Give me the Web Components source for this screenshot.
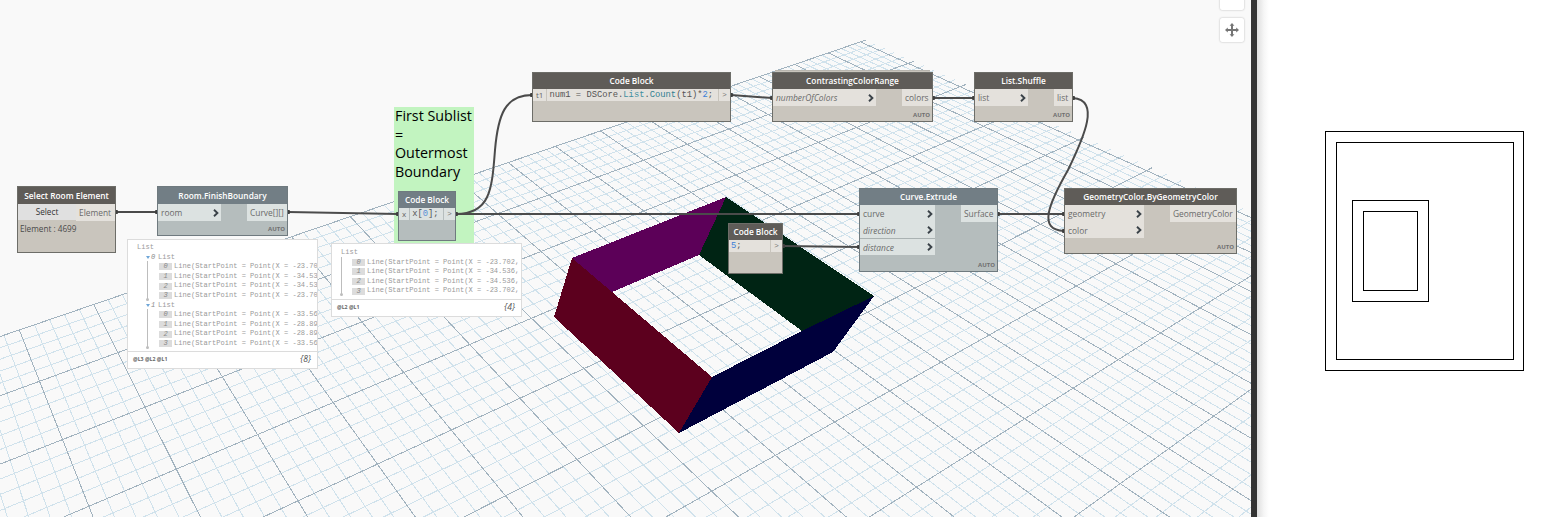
<!DOCTYPE html>
<html>
<head>
<meta charset="utf-8">
<title>Dynamo graph</title>
<style>
    html, body { margin: 0; padding: 0; background: #fff; overflow: hidden; }
</style>
</head>
<body>
<dyn-workspace>
    <dyn-grid></dyn-grid>
    <dyn-note x="394" y="107" w="80" h="136">First Sublist<br>=<br>Outermost<br>Boundary</dyn-note>
    <dyn-wires></dyn-wires>

    <dyn-node label="Select Room Element" x="17" y="186" w="99" h="67" style="--head-h:17px">
        <dyn-split>
            <dyn-button slot="in" style="width:58px">Select</dyn-button>
            <dyn-port slot="out" style="width:39px">Element</dyn-port>
        </dyn-split>
        <dyn-readout>Element : 4699</dyn-readout>
    </dyn-node>

    <dyn-node tone="blue" auto label="Room.FinishBoundary" x="157" y="186" w="131" h="50" style="--head-h:17px">
        <dyn-split>
            <dyn-port slot="in" chevron style="width:63px">room</dyn-port>
            <dyn-port slot="out" style="width:40px">Curve[][]</dyn-port>
        </dyn-split>
    </dyn-node>

    <dyn-node tone="blue" label="Code Block" x="398" y="191" w="58" h="50">
        <dyn-code port="x">x[<span style="color:#5b8fd6">0</span>];</dyn-code>
    </dyn-node>

    <dyn-node label="Code Block" x="532" y="72" w="199" h="50">
        <dyn-code port="t1">num1 = DSCore.<span style="color:#3f8f9f">List</span>.<span style="color:#2f7f90">Count</span>(t1)*<span style="color:#3c7fd8">2</span>;</dyn-code>
    </dyn-node>

    <dyn-node auto stacked label="ContrastingColorRange" x="772" y="72" w="161" h="50">
        <dyn-split>
            <dyn-port slot="in" chevron italic style="width:103px">numberOfColors</dyn-port>
            <dyn-port slot="out" style="width:30px">colors</dyn-port>
        </dyn-split>
    </dyn-node>

    <dyn-node auto label="List.Shuffle" x="974" y="72" w="99" h="50">
        <dyn-split>
            <dyn-port slot="in" chevron style="width:53px">list</dyn-port>
            <dyn-port slot="out" style="width:18px">list</dyn-port>
        </dyn-split>
    </dyn-node>

    <dyn-node tone="blue" auto label="Curve.Extrude" x="859" y="188" w="139" h="84">
        <dyn-split>
            <dyn-port slot="in" chevron style="width:75px">curve</dyn-port>
            <dyn-port slot="in" chevron italic style="width:75px">direction</dyn-port>
            <dyn-port slot="in" chevron italic divided style="width:75px">distance</dyn-port>
            <dyn-port slot="out" style="width:36px">Surface</dyn-port>
        </dyn-split>
    </dyn-node>

    <dyn-node auto label="GeometryColor.ByGeometryColor" x="1064" y="188" w="173" h="66">
        <dyn-split>
            <dyn-port slot="in" chevron style="width:79px">geometry</dyn-port>
            <dyn-port slot="in" chevron style="width:79px">color</dyn-port>
            <dyn-port slot="out" style="width:66px">GeometryColor</dyn-port>
        </dyn-split>
    </dyn-node>

    <dyn-node label="Code Block" x="728" y="223" w="55" h="51">
        <dyn-code><span style="color:#3c7fd8">5</span>;</dyn-code>
    </dyn-node>

    <dyn-watch x="127" y="239" w="191" h="130" pad="3" levels="@L3 @L2 @L1" count="{8}">
        <dyn-watch-head>List</dyn-watch-head>
        <dyn-watch-group index="0">
            <dyn-watch-row index="0">Line(StartPoint = Point(X = -23.70</dyn-watch-row>
            <dyn-watch-row index="1">Line(StartPoint = Point(X = -34.53</dyn-watch-row>
            <dyn-watch-row index="2">Line(StartPoint = Point(X = -34.53</dyn-watch-row>
            <dyn-watch-row index="3">Line(StartPoint = Point(X = -23.70</dyn-watch-row>
        </dyn-watch-group>
        <dyn-watch-group index="1">
            <dyn-watch-row index="0">Line(StartPoint = Point(X = -33.56</dyn-watch-row>
            <dyn-watch-row index="1">Line(StartPoint = Point(X = -28.89</dyn-watch-row>
            <dyn-watch-row index="2">Line(StartPoint = Point(X = -28.89</dyn-watch-row>
            <dyn-watch-row index="3">Line(StartPoint = Point(X = -33.56</dyn-watch-row>
        </dyn-watch-group>
    </dyn-watch>

    <dyn-watch x="331" y="243" w="191" h="74" pad="4" levels="@L2 @L1" count="{4}">
        <dyn-watch-head>List</dyn-watch-head>
        <dyn-watch-flat>
            <dyn-watch-row index="0">Line(StartPoint = Point(X = -23.702,</dyn-watch-row>
            <dyn-watch-row index="1">Line(StartPoint = Point(X = -34.536,</dyn-watch-row>
            <dyn-watch-row index="2">Line(StartPoint = Point(X = -34.536,</dyn-watch-row>
            <dyn-watch-row index="3">Line(StartPoint = Point(X = -23.702,</dyn-watch-row>
        </dyn-watch-flat>
    </dyn-watch>

    <dyn-nav></dyn-nav>
    <dyn-plan slot="side"></dyn-plan>
</dyn-workspace>

<script>
const SVG_NS = 'http://www.w3.org/2000/svg';

function shadowOf(el, html) {
    const root = el.attachShadow({ mode: 'open' });
    root.innerHTML = html;
    return root;
}

// free canvas items read their place from attributes
function place(el) {
    el.style.left = el.getAttribute('x') + 'px';
    el.style.top = el.getAttribute('y') + 'px';
    el.style.width = el.getAttribute('w') + 'px';
    el.style.height = el.getAttribute('h') + 'px';
}

class DynWorkspace extends HTMLElement {
    connectedCallback() {
        shadowOf(this, `
            <style>
                :host { display: flex; width: 1557px; height: 517px; overflow: hidden; font-family: "Open Sans", sans-serif; }
                .canvas { position: relative; width: 1251px; height: 517px; background: #f9f9f9; overflow: hidden; flex: none; }
                .divider { width: 6px; background: #333; flex: none; }
                .side { flex: 1; position: relative; background: linear-gradient(90deg, #dedede 0, #f6f6f6 7px, #fff 12px); }
            </style>
            <div class="canvas"><slot></slot></div>
            <div class="divider"></div>
            <div class="side"><slot name="side"></slot></div>
        `);
    }
}

class DynGrid extends HTMLElement {
    connectedCallback() {
        const root = shadowOf(this, `
            <style>
                :host { position: absolute; left: 0; top: 0; }
                svg { display: block; }
            </style>
            <svg width="1251" height="517" viewBox="0 0 1251 517"></svg>
        `);
        const svg = root.querySelector('svg');

        // two vanishing points and the far corner of the grid
        const C = [866, 40], VB = [3100, -725], VA = [-300, -480];
        const pt = (s, t) => {
            const w = 1 - s - t;
            return [(C[0] - s * VB[0] - t * VA[0]) / w, (C[1] - s * VB[1] - t * VA[1]) / w];
        };
        const S_MAX = 0.34, T_MAX = 0.5;
        // k counts major lines, fitted on the reference
        const sAt = k => 0.0754 + 0.0153 * k + 0.00024 * k * (k - 1) / 2;
        const tAt = k => 0.0433 * k;

        const minor = [], major = [];
        const add = (list, a, b) => list.push(`M${a[0].toFixed(1)} ${a[1].toFixed(1)}L${b[0].toFixed(1)} ${b[1].toFixed(1)}`);

        for (let i = -25; ; i++) {
            const s = sAt(i / 5);
            if (s > S_MAX) break;
            add(i % 5 === 0 ? major : minor, pt(s, 0), pt(s, T_MAX));
        }
        for (let i = 0; ; i++) {
            const t = tAt(i / 5);
            if (t > T_MAX) break;
            // these lines fan out a little from the far edge
            add(i % 5 === 0 ? major : minor, pt(0, t * 0.9104), pt(S_MAX, t * 1.019));
        }

        const path = (d, color) => {
            const p = document.createElementNS(SVG_NS, 'path');
            p.setAttribute('d', d);
            p.setAttribute('fill', 'none');
            p.setAttribute('stroke', color);
            p.setAttribute('stroke-width', '1');
            p.setAttribute('shape-rendering', 'crispEdges');
            svg.appendChild(p);
        };
        path(minor.join(''), '#d0e2ec');
        path(major.join(''), '#a2b3bf');

        // extruded room
        [
            ['572,258 726,197 699,255 612,292', '#5c0058'],
            ['726,197 874,296 802,331 699,255', '#002414'],
            ['572,258 554,317 679,433 712,377 612,292', '#5c001e'],
            ['874,296 833,352 679,433 712,377 802,331', '#00003c'],
        ].forEach(([points, fill]) => {
            const poly = document.createElementNS(SVG_NS, 'polygon');
            poly.setAttribute('points', points);
            poly.setAttribute('fill', fill);
            poly.setAttribute('shape-rendering', 'crispEdges');
            svg.appendChild(poly);
        });
    }
}

class DynWires extends HTMLElement {
    connectedCallback() {
        const wires = [
            'M116 212L157 212',
            'M288 212L398 214',
            'M456 214L859 214',
            'M456 214C490 214 492 190 495 150C498 115 505 95 532 95',
            'M731 95L772 98',
            'M933 98L974 98',
            'M1073 98C1100 100 1085 135 1068 170C1048 205 1038 230 1064 231',
            'M998 214L1064 214',
            'M783 246L859 247',
        ];
        const nubs = [[116,212],[157,212],[288,212],[398,214],[456,214],[532,95],[731,95],[772,98],[933,98],[974,98],[859,214],[998,214],[1064,214],[1064,231],[783,246],[859,247],[1073,98]];
        shadowOf(this, `
            <style>
                :host { position: absolute; left: 0; top: 0; }
                svg { display: block; }
                path { fill: none; stroke: #4b4b4b; stroke-width: 2; }
                rect { fill: #3f3f3f; }
            </style>
            <svg width="1251" height="517" viewBox="0 0 1251 517">
                ${wires.map(d => `<path d="${d}"></path>`).join('')}
                ${nubs.map(([x, y]) => `<rect x="${x - 2}" y="${y - 2}" width="4" height="4" rx="1"></rect>`).join('')}
            </svg>
        `);
    }
}

class DynNote extends HTMLElement {
    connectedCallback() {
        place(this);
        shadowOf(this, `
            <style>
                :host { position: absolute; display: block; background: #c2f4c0; color: #000; font: 14.3px/18.7px "Open Sans", sans-serif; box-sizing: border-box; padding: 0 1px; white-space: nowrap; }
            </style>
            <slot></slot>
        `);
    }
}

class DynNode extends HTMLElement {
    connectedCallback() {
        place(this);
        const auto = this.hasAttribute('auto') ? '<div class="auto">AUTO</div>' : '';
        const stack = this.hasAttribute('stacked') ? '<div class="stack"></div>' : '';
        shadowOf(this, `
            <style>
                :host {
                    --head: #5f5c58; --body: #c9c5bd; --edge: #6d6d68; --port: #e4e1dc; --btn: #e0e0e0;
                    position: absolute; display: flex; flex-direction: column; box-sizing: border-box;
                    background: var(--body); border: 1px solid var(--edge);
                    font-family: "Open Sans", sans-serif;
                }
                :host([tone="blue"]) { --head: #727e85; --body: #b5bdbd; --edge: #6f7a7f; --port: #dce2e1; }
                .head {
                    flex: none; height: var(--head-h, 16px); background: var(--head); color: #fff;
                    font-size: 8.3px; font-weight: 600; line-height: var(--head-h, 16px); text-align: center; white-space: nowrap;
                }
                .main { flex: 1; display: flex; flex-direction: column; min-height: 0; }
                .auto { position: absolute; right: 2px; bottom: 2px; font-size: 6px; line-height: 8px; font-weight: 700; color: #6f6f6f; }
                .stack { position: absolute; left: 2px; right: 2px; top: -3px; height: 2px; background: #c9c5bd; border-top: 1px solid #b8b5ae; box-sizing: border-box; }
            </style>
            ${stack}
            <div class="head">${this.getAttribute('label')}</div>
            <div class="main"><slot></slot></div>
            ${auto}
        `);
    }
}

class DynSplit extends HTMLElement {
    connectedCallback() {
        shadowOf(this, `
            <style>
                :host { display: flex; justify-content: space-between; align-items: flex-start; }
                div { display: flex; flex-direction: column; }
                .out { align-items: flex-end; }
            </style>
            <div><slot name="in"></slot></div>
            <div class="out"><slot name="out"></slot></div>
        `);
    }
}

class DynPort extends HTMLElement {
    connectedCallback() {
        const chevron = this.hasAttribute('chevron')
            ? '<svg width="6" height="8" viewBox="0 0 6 8"><path d="M1 0.8L4.4 4L1 7.2" fill="none" stroke="#3a4248" stroke-width="1.9"></path></svg>'
            : '';
        shadowOf(this, `
            <style>
                :host {
                    display: flex; align-items: center; justify-content: space-between; box-sizing: border-box;
                    height: 16.5px; padding: 1px 2px 0 3px; background: var(--port); color: #6a6a6a;
                    font-size: 8.4px; white-space: nowrap;
                }
                :host([italic]) { font-style: italic; }
                :host([divided]) { border-top: 1px solid #aab2b2; }
                svg { flex: none; }
            </style>
            <span><slot></slot></span>${chevron}
        `);
    }
}

class DynButton extends HTMLElement {
    connectedCallback() {
        shadowOf(this, `
            <style>
                :host { display: block; height: 16px; background: var(--btn); color: #333; font-size: 8.2px; line-height: 16px; text-align: center; }
            </style>
            <slot></slot>
        `);
    }
}

class DynReadout extends HTMLElement {
    connectedCallback() {
        shadowOf(this, `
            <style>
                :host { display: block; padding: 0 2px; font-size: 8.2px; line-height: 15px; color: #4a4a4a; }
            </style>
            <slot></slot>
        `);
    }
}

class DynCode extends HTMLElement {
    connectedCallback() {
        const port = this.getAttribute('port');
        shadowOf(this, `
            <style>
                :host { display: flex; height: 12px; font: 8.8px/12px "Liberation Mono", monospace; color: #555; }
                .port { flex: none; padding: 0 3px; margin-right: 1px; background: var(--port); font-family: "Open Sans", sans-serif; font-size: 8px; color: #666; }
                .code { flex: 1; padding-left: 2px; background: var(--port); white-space: nowrap; overflow: hidden; }
                .arrow { flex: none; width: 11px; margin-left: 1px; background: var(--port); text-align: center; font-size: 7.5px; color: #777; }
            </style>
            ${port ? `<div class="port">${port}</div>` : ''}
            <div class="code"><slot></slot></div>
            <div class="arrow">&gt;</div>
        `);
    }
}

class DynWatch extends HTMLElement {
    connectedCallback() {
        place(this);
        shadowOf(this, `
            <style>
                :host {
                    position: absolute; display: flex; flex-direction: column; box-sizing: border-box;
                    background: #fff; border: 1px solid #dcdcdc; overflow: hidden;
                    font: 7.06px/9.6px "Liberation Mono", monospace; color: #9a9a9a;
                }
                .list { flex: 1; padding: ${this.getAttribute('pad')}px 0 0 9px; min-height: 0; overflow: hidden; }
                .foot {
                    flex: none; height: 16px; display: flex; justify-content: space-between; align-items: center;
                    border-top: 1px solid #dcdcdc; padding: 0 6px 0 5px;
                    font-family: "Open Sans", sans-serif;
                }
                .levels { font-size: 5.2px; font-weight: 700; color: #666; }
                .count { font-size: 8.6px; font-style: italic; color: #555; }
            </style>
            <div class="list"><slot></slot></div>
            <div class="foot"><span class="levels">${this.getAttribute('levels')}</span><span class="count">${this.getAttribute('count')}</span></div>
        `);
    }
}

class DynWatchHead extends HTMLElement {
    connectedCallback() {
        shadowOf(this, `
            <style>:host { display: block; height: 9.6px; }</style>
            <slot></slot>
        `);
    }
}

class DynWatchGroup extends HTMLElement {
    connectedCallback() {
        const i = this.getAttribute('index');
        shadowOf(this, `
            <style>
                :host { display: block; position: relative; padding-left: 9px; }
                .title { display: flex; height: 9.6px; align-items: center; }
                .arrow { width: 0; height: 0; border: 2px solid transparent; border-top: 3px solid #6ea6d8; border-bottom: 0; margin-right: 1px; }
                .i { font-style: italic; color: #8a8a8a; width: 7px; }
                .rail { position: absolute; left: 9px; top: 8px; bottom: 1px; width: 1px; background: #bdbdbd; margin-left: 1px; }
                .dot { position: absolute; left: 9px; bottom: 0; width: 3px; height: 3px; border-radius: 50%; background: #bdbdbd; }
                .rows { padding-left: 13px; }
            </style>
            <div class="title"><span class="arrow"></span><span class="i">${i}</span>List</div>
            <div class="rail"></div>
            <div class="dot"></div>
            <div class="rows"><slot></slot></div>
        `);
    }
}

class DynWatchFlat extends HTMLElement {
    connectedCallback() {
        shadowOf(this, `
            <style>
                :host { display: block; position: relative; padding-left: 11px; }
                .rail { position: absolute; left: 0; top: -1px; bottom: 2px; width: 1px; background: #bdbdbd; }
                .dot { position: absolute; left: -1px; bottom: 0; width: 3px; height: 3px; border-radius: 50%; background: #bdbdbd; }
            </style>
            <div class="rail"></div>
            <div class="dot"></div>
            <slot></slot>
        `);
    }
}

class DynWatchRow extends HTMLElement {
    connectedCallback() {
        shadowOf(this, `
            <style>
                :host { display: flex; align-items: center; height: 9.6px; white-space: nowrap; }
                .i { flex: none; width: 13px; height: 7px; line-height: 7px; text-align: center; margin-right: 2px; background: #dcdcdc; font-style: italic; color: #888; }
            </style>
            <span class="i">${this.getAttribute('index')}</span><slot></slot>
        `);
    }
}

class DynNav extends HTMLElement {
    connectedCallback() {
        shadowOf(this, `
            <style>
                :host { position: absolute; left: 1220px; top: -14px; display: flex; flex-direction: column; gap: 8px; }
                div { display: flex; align-items: center; justify-content: center; width: 24px; height: 24px; background: #fff; border-radius: 2px; box-shadow: 0 0 2px rgba(0,0,0,.3); }
            </style>
            <div></div>
            <div>
                <svg width="14" height="14" viewBox="0 0 14 14" fill="#757575">
                    <path d="M7 0L9.4 2.8H8V6H11.2V4.6L14 7L11.2 9.4V8H8V11.2H9.4L7 14L4.6 11.2H6V8H2.8V9.4L0 7L2.8 4.6V6H6V2.8H4.6Z"></path>
                </svg>
            </div>
        `);
    }
}

class DynPlan extends HTMLElement {
    connectedCallback() {
        const rects = [[1325.5, 131.5, 198, 239], [1336.5, 142.5, 177, 217], [1352.5, 200.5, 76, 101], [1363.5, 211.5, 54, 79]];
        shadowOf(this, `
            <style>
                :host { position: absolute; left: 0; top: 0; }
                svg { display: block; }
                rect { fill: none; stroke: #000; stroke-width: 1; }
            </style>
            <svg width="300" height="517" viewBox="1257 0 300 517">
                ${rects.map(([x, y, w, h]) => `<rect x="${x}" y="${y}" width="${w}" height="${h}"></rect>`).join('')}
            </svg>
        `);
    }
}

customElements.define('dyn-workspace', DynWorkspace);
customElements.define('dyn-grid', DynGrid);
customElements.define('dyn-wires', DynWires);
customElements.define('dyn-note', DynNote);
customElements.define('dyn-node', DynNode);
customElements.define('dyn-split', DynSplit);
customElements.define('dyn-port', DynPort);
customElements.define('dyn-button', DynButton);
customElements.define('dyn-readout', DynReadout);
customElements.define('dyn-code', DynCode);
customElements.define('dyn-watch', DynWatch);
customElements.define('dyn-watch-head', DynWatchHead);
customElements.define('dyn-watch-group', DynWatchGroup);
customElements.define('dyn-watch-flat', DynWatchFlat);
customElements.define('dyn-watch-row', DynWatchRow);
customElements.define('dyn-nav', DynNav);
customElements.define('dyn-plan', DynPlan);
</script>
</body>
</html>
